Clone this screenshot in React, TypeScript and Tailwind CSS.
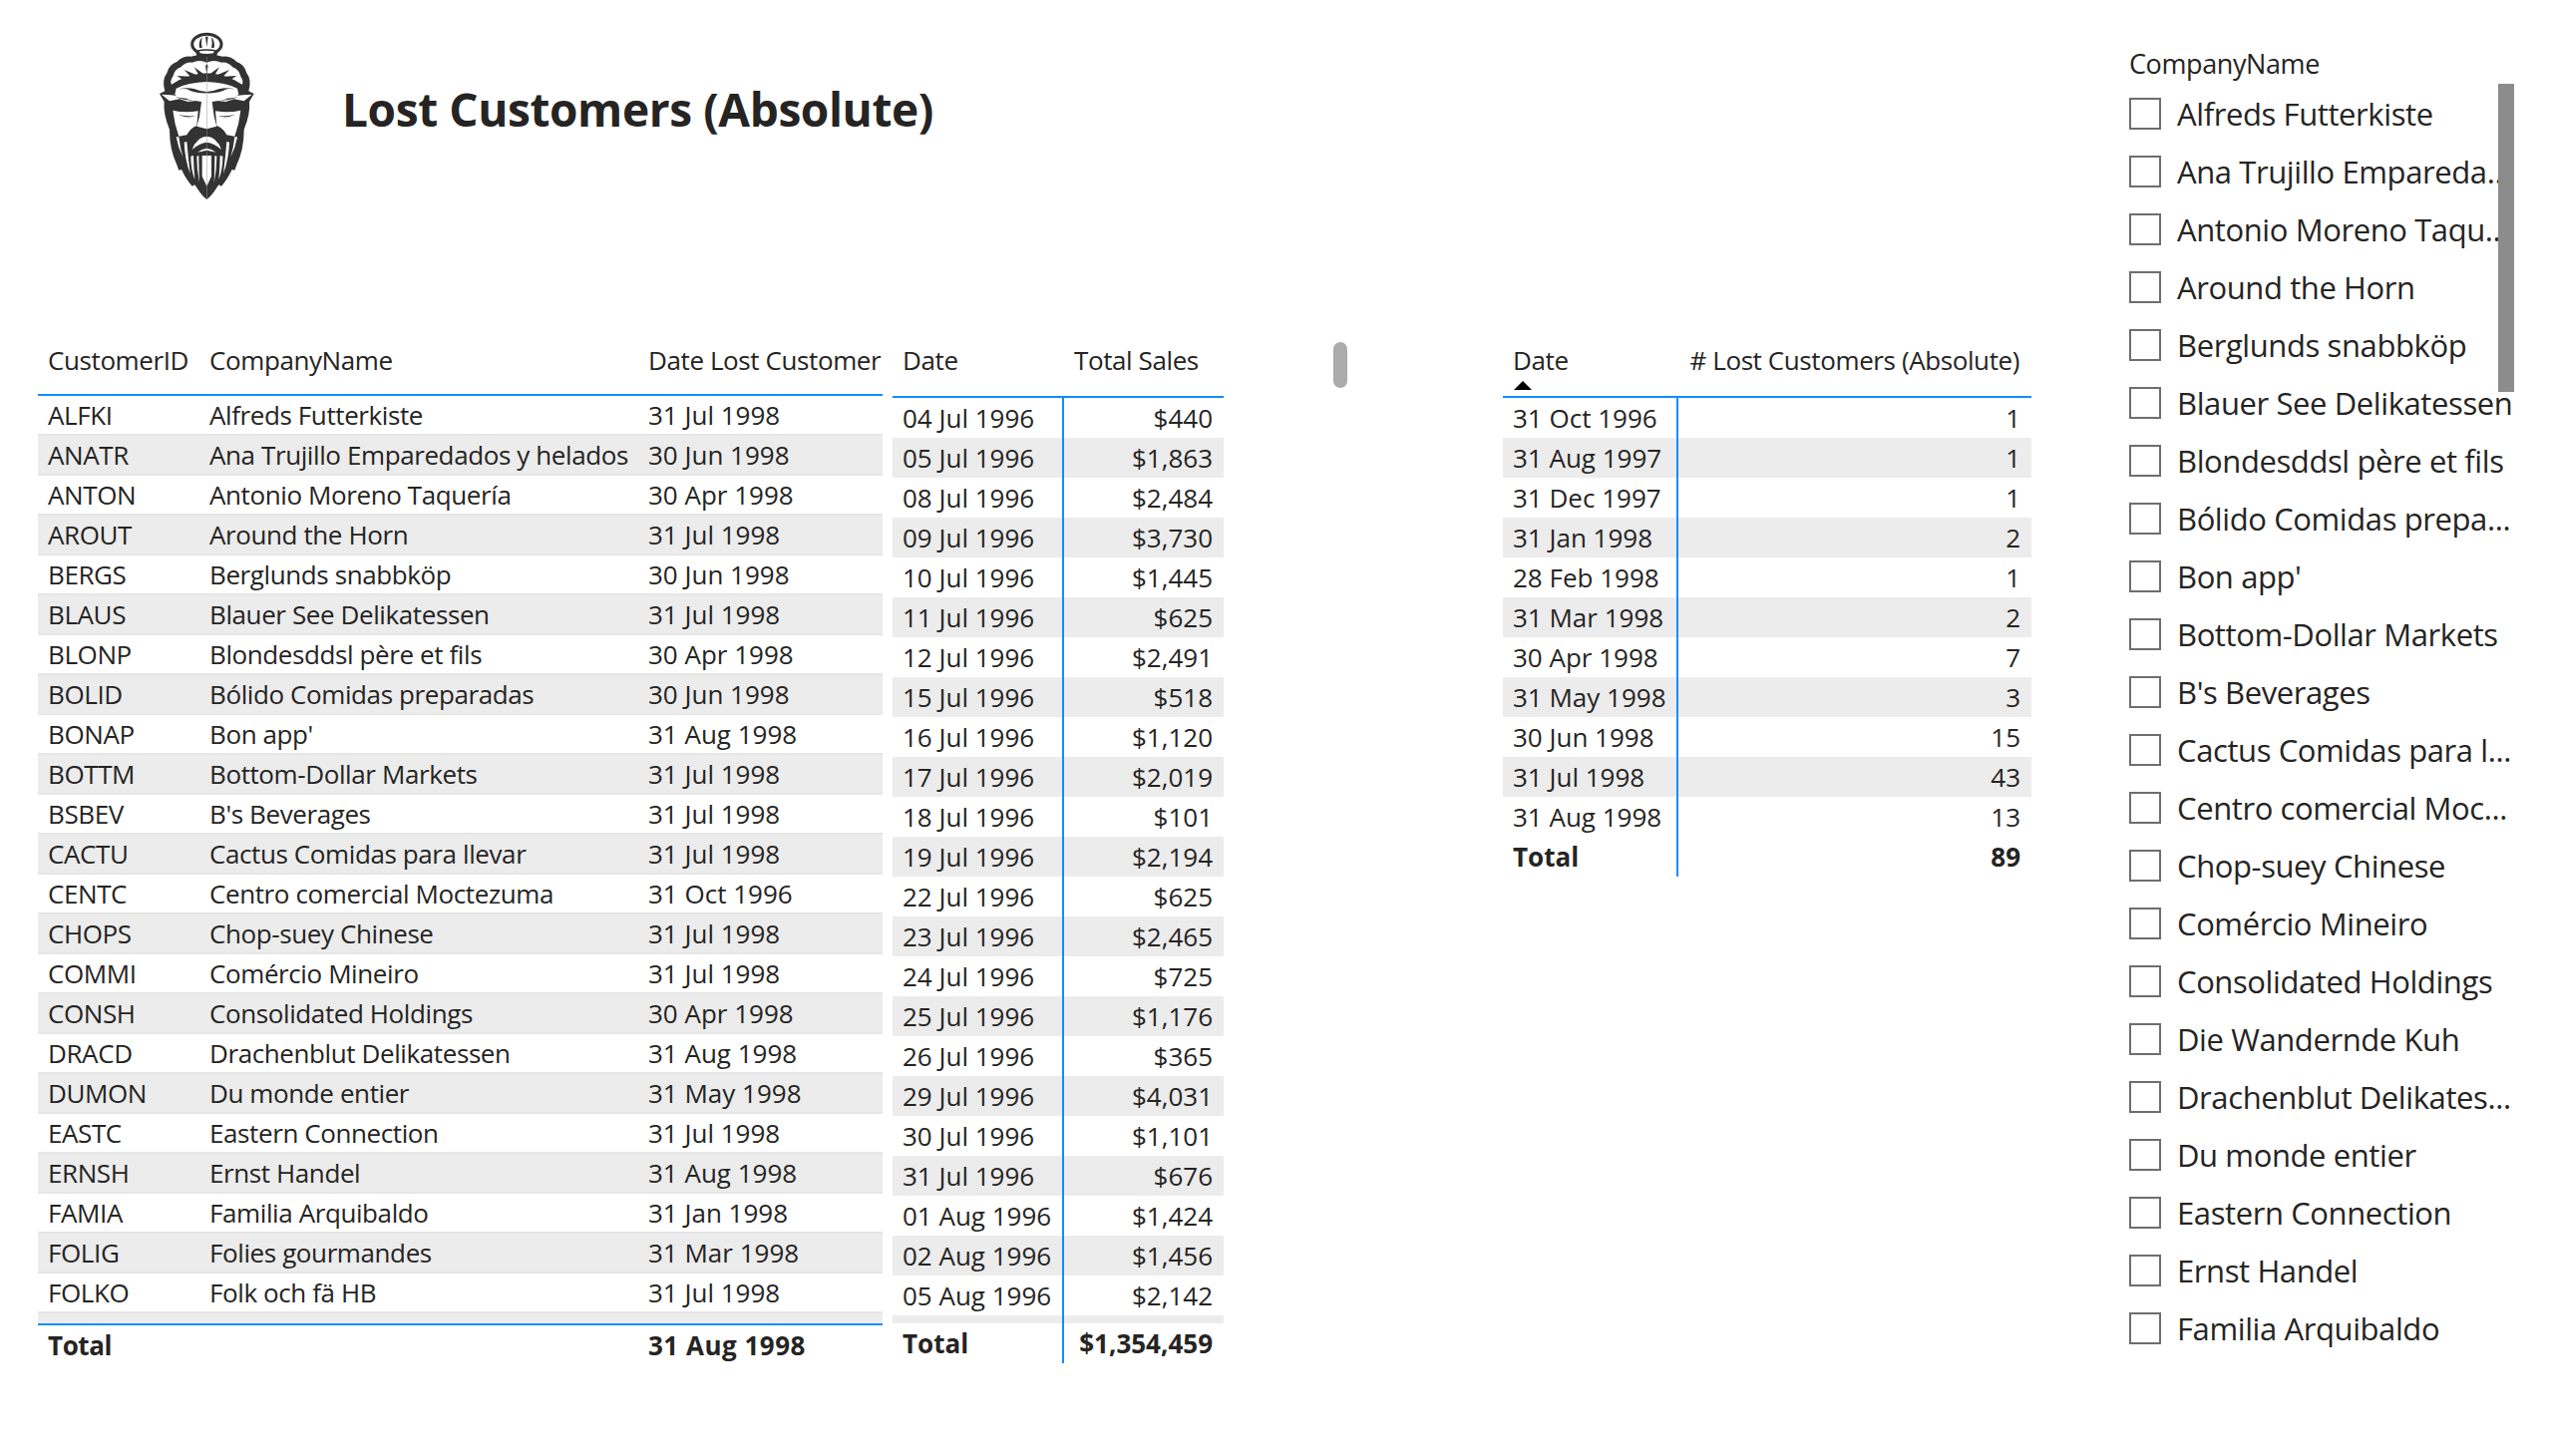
const customers: [string, string, string][] = [
  ["ALFKI", "Alfreds Futterkiste", "31 Jul 1998"],
  ["ANATR", "Ana Trujillo Emparedados y helados", "30 Jun 1998"],
  ["ANTON", "Antonio Moreno Taquería", "30 Apr 1998"],
  ["AROUT", "Around the Horn", "31 Jul 1998"],
  ["BERGS", "Berglunds snabbköp", "30 Jun 1998"],
  ["BLAUS", "Blauer See Delikatessen", "31 Jul 1998"],
  ["BLONP", "Blondesddsl père et fils", "30 Apr 1998"],
  ["BOLID", "Bólido Comidas preparadas", "30 Jun 1998"],
  ["BONAP", "Bon app'", "31 Aug 1998"],
  ["BOTTM", "Bottom-Dollar Markets", "31 Jul 1998"],
  ["BSBEV", "B's Beverages", "31 Jul 1998"],
  ["CACTU", "Cactus Comidas para llevar", "31 Jul 1998"],
  ["CENTC", "Centro comercial Moctezuma", "31 Oct 1996"],
  ["CHOPS", "Chop-suey Chinese", "31 Jul 1998"],
  ["COMMI", "Comércio Mineiro", "31 Jul 1998"],
  ["CONSH", "Consolidated Holdings", "30 Apr 1998"],
  ["DRACD", "Drachenblut Delikatessen", "31 Aug 1998"],
  ["DUMON", "Du monde entier", "31 May 1998"],
  ["EASTC", "Eastern Connection", "31 Jul 1998"],
  ["ERNSH", "Ernst Handel", "31 Aug 1998"],
  ["FAMIA", "Familia Arquibaldo", "31 Jan 1998"],
  ["FOLIG", "Folies gourmandes", "31 Mar 1998"],
  ["FOLKO", "Folk och fä HB", "31 Jul 1998"],
];

const sales: [string, string][] = [
  ["04 Jul 1996", "$440"],
  ["05 Jul 1996", "$1,863"],
  ["08 Jul 1996", "$2,484"],
  ["09 Jul 1996", "$3,730"],
  ["10 Jul 1996", "$1,445"],
  ["11 Jul 1996", "$625"],
  ["12 Jul 1996", "$2,491"],
  ["15 Jul 1996", "$518"],
  ["16 Jul 1996", "$1,120"],
  ["17 Jul 1996", "$2,019"],
  ["18 Jul 1996", "$101"],
  ["19 Jul 1996", "$2,194"],
  ["22 Jul 1996", "$625"],
  ["23 Jul 1996", "$2,465"],
  ["24 Jul 1996", "$725"],
  ["25 Jul 1996", "$1,176"],
  ["26 Jul 1996", "$365"],
  ["29 Jul 1996", "$4,031"],
  ["30 Jul 1996", "$1,101"],
  ["31 Jul 1996", "$676"],
  ["01 Aug 1996", "$1,424"],
  ["02 Aug 1996", "$1,456"],
  ["05 Aug 1996", "$2,142"],
];

const lost: [string, string][] = [
  ["31 Oct 1996", "1"],
  ["31 Aug 1997", "1"],
  ["31 Dec 1997", "1"],
  ["31 Jan 1998", "2"],
  ["28 Feb 1998", "1"],
  ["31 Mar 1998", "2"],
  ["30 Apr 1998", "7"],
  ["31 May 1998", "3"],
  ["30 Jun 1998", "15"],
  ["31 Jul 1998", "43"],
  ["31 Aug 1998", "13"],
];

const slicerItems = [
  "Alfreds Futterkiste",
  "Ana Trujillo Empareda...",
  "Antonio Moreno Taqu...",
  "Around the Horn",
  "Berglunds snabbköp",
  "Blauer See Delikatessen",
  "Blondesddsl père et fils",
  "Bólido Comidas prepa...",
  "Bon app'",
  "Bottom-Dollar Markets",
  "B's Beverages",
  "Cactus Comidas para l...",
  "Centro comercial Moc...",
  "Chop-suey Chinese",
  "Comércio Mineiro",
  "Consolidated Holdings",
  "Die Wandernde Kuh",
  "Drachenblut Delikates...",
  "Du monde entier",
  "Eastern Connection",
  "Ernst Handel",
  "Familia Arquibaldo",
];

// one half of the face, mirrored around x=262 in Logo
function LogoHalf() {
  return (
    <g>
      {/* silhouette */}
      <path
        fill="#333"
        d="M262 112 Q240 100 215 110 Q190 108 172 126 Q148 134 142 160 Q126 180 136 214 L120 222 L134 246 Q130 280 150 330 Q150 390 172 436 L178 452 L186 450 Q200 480 218 500 L226 496 L234 508 Q248 530 262 540 Z"
      />
      {/* hair */}
      <path
        fill="#fff"
        d="M262 128 Q240 118 218 128 Q198 126 184 142 Q164 150 160 170 Q150 184 156 194 Q205 162 262 160 Z"
      />
      <path fill="#333" d="M262 164 L258 138 L262 132 Z M238 166 L224 142 L252 162 Z M214 172 L194 150 L232 166 Z M194 182 L172 168 L212 170 Z" />
      {/* forehead and nose */}
      <path
        fill="#fff"
        d="M262 186 Q205 188 170 206 L166 224 L182 236 L246 246 L240 290 L232 320 L262 328 Z"
      />
      <path fill="#333" d="M262 220 Q225 222 202 208 Q182 206 168 210 Q200 200 226 208 Q245 216 262 216 Z" />
      {/* pointed brow */}
      <path fill="#fff" d="M126 224 Q180 224 236 242 L205 246 L180 238 L150 244 Z" />
      <path fill="#333" d="M165 232 Q195 234 222 243 L196 240 Z" />
      {/* cheek */}
      <path fill="#fff" d="M160 272 Q195 280 236 274 L232 318 Q212 326 202 346 L178 350 Q164 310 160 272 Z" />
      <path fill="#333" d="M176 284 Q205 298 228 288 Q205 292 176 284 Z" />
      {/* beard streaks */}
      <path fill="#fff" d="M170 352 Q176 385 190 412 Q182 385 178 352 Z M194 368 Q196 420 212 462 Q206 414 202 366 Z" />
      <path fill="#fff" d="M214 410 Q214 450 226 480 Q222 440 222 408 Z M232 410 Q232 450 240 490 Q238 440 238 408 Z" />
      <path fill="#fff" d="M262 350 Q232 352 218 390 Q240 370 262 368 Z" />
      <path fill="#fff" d="M262 392 L234 398 Q248 388 262 386 Z M262 408 L248 408 L248 470 L262 500 Z" />
    </g>
  );
}

function Logo() {
  return (
    <svg viewBox="0 0 540 570" className="w-[180px] h-[190px] shrink-0">
      <ellipse cx="262" cy="73" rx="44" ry="30" fill="#fff" stroke="#333" strokeWidth="9" />
      <path
        fill="#333"
        d="M228 92 Q262 84 296 92 L292 108 Q262 116 232 108 Z M240 84 Q236 66 248 52 Q244 70 248 84 Z M262 82 L258 50 L266 50 Z M284 84 Q288 66 276 52 Q280 70 276 84 Z"
      />
      <path fill="#fff" d="M240 94 Q262 90 284 94 L282 100 Q262 104 242 100 Z" />
      <LogoHalf />
      <g transform="matrix(-1 0 0 1 524 0)">
        <LogoHalf />
      </g>
    </svg>
  );
}

function CustomerTable() {
  return (
    <div className="w-[847px] shrink-0">
      <div className="flex h-[52px]">
        <div className="w-[162px] px-[10px] leading-[36px] whitespace-nowrap">CustomerID</div>
        <div className="w-[440px] px-[10px] leading-[36px]">CompanyName</div>
        <div className="w-[245px] px-[10px] leading-[36px] whitespace-nowrap">Date Lost Customer</div>
      </div>
      <div className="border-t-2 border-[#118dff] border-b-2">
        {customers.map((c, i) => (
          <div
            key={c[0]}
            className={`flex h-[40px] border-b-2 border-[#e6e6e6] ${i % 2 === 1 ? "bg-[#ececec]" : "bg-white"}`}
          >
            <div className="w-[162px] px-[10px] leading-[39px]">{c[0]}</div>
            <div className="w-[440px] px-[10px] leading-[39px] whitespace-nowrap">{c[1]}</div>
            <div className="w-[245px] px-[10px] leading-[39px] tracking-normal">{c[2]}</div>
          </div>
        ))}
        <div className="h-[10px] bg-[#ececec]"></div>
      </div>
      <div className="flex h-[38px] font-bold leading-[40px]">
        <div className="w-[602px] px-[10px]">Total</div>
        <div className="w-[245px] px-[10px] tracking-[0.5px]">31 Aug 1998</div>
      </div>
    </div>
  );
}

function SalesTable() {
  return (
    <div className="w-[332px] ml-[10px] shrink-0">
      <div className="flex h-[54px]">
        <div className="w-[172px] px-[10px] leading-[36px]">Date</div>
        <div className="w-[160px] px-[10px] leading-[36px] whitespace-nowrap">Total Sales</div>
      </div>
      <div className="border-t-2 border-[#118dff] tracking-normal">
        {sales.map((s, i) => (
          <div key={s[0]} className={`flex h-[40px] leading-[40px] ${i % 2 === 1 ? "bg-[#ececec]" : "bg-white"}`}>
            <div className="w-[172px] px-[10px] border-r-2 border-[#118dff] whitespace-nowrap">{s[0]}</div>
            <div className="w-[160px] px-[11px] text-right">{s[1]}</div>
          </div>
        ))}
        <div className="flex h-[8px] bg-[#ececec]">
          <div className="w-[172px] border-r-2 border-[#118dff]"></div>
        </div>
        <div className="flex h-[40px] leading-[40px] font-bold">
          <div className="w-[172px] px-[10px] border-r-2 border-[#118dff]">Total</div>
          <div className="w-[160px] px-[11px] text-right whitespace-nowrap">$1,354,459</div>
        </div>
      </div>
    </div>
  );
}

function LostTable() {
  return (
    <div className="w-[530px] ml-[156px] shrink-0">
      <div className="h-[54px] flex">
        <div className="w-[176px] pl-[10px] relative leading-[36px]">
          Date
          <svg viewBox="0 0 18 9" className="w-[18px] h-[9px] absolute left-[11px] top-[39px]">
            <path d="M0 9 L9 0 L18 9 Z" fill="#000" />
          </svg>
        </div>
        <div className="flex-1 pr-[12px] text-right leading-[36px] whitespace-nowrap"># Lost Customers (Absolute)</div>
      </div>
      <div className="border-t-2 border-[#118dff] tracking-normal">
        {lost.map((l, i) => (
          <div key={l[0]} className={`flex h-[40px] leading-[40px] ${i % 2 === 1 ? "bg-[#ececec]" : "bg-white"}`}>
            <div className="w-[176px] pl-[10px] border-r-2 border-[#118dff]">{l[0]}</div>
            <div className="flex-1 pr-[11px] text-right">{l[1]}</div>
          </div>
        ))}
        <div className="flex h-[40px] leading-[40px] font-bold">
          <div className="w-[176px] pl-[10px] border-r-2 border-[#118dff]">Total</div>
          <div className="flex-1 pr-[11px] text-right">89</div>
        </div>
      </div>
    </div>
  );
}

function Slicer() {
  return (
    <div className="relative w-[425px] shrink-0 pt-[45px]">
      <div className="h-[40px] leading-[38px] text-[27px] font-medium">CompanyName</div>
      {slicerItems.map((name) => (
        <div key={name} className="flex items-center h-[58px]">
          <div className="w-[32px] h-[32px] border-2 border-[#6f6d6d] shrink-0"></div>
          <div className="ml-[16px] text-[31px] whitespace-nowrap">{name}</div>
        </div>
      ))}
      <div className="absolute left-[370px] top-[84px] w-[16px] h-[309px] bg-[#8c8c8c]"></div>
    </div>
  );
}

export default function App() {
  return (
    <div className="w-[2560px] h-[1460px] bg-white flex text-[#252423] text-[26px] tracking-[-0.4px] overflow-hidden font-['Open_Sans',sans-serif]">
      <div className="w-[2135px] shrink-0">
        <div className="h-[343px] pl-[120px] pt-[20px] flex items-start">
          <Logo />
          <h1 className="ml-[43px] mt-[53px] text-[46px] leading-[72px] font-bold whitespace-nowrap">
            Lost Customers (Absolute)
          </h1>
        </div>
        <div className="flex items-start pl-[38px]">
          <CustomerTable />
          <SalesTable />
          <div className="ml-[110px] w-[14px] h-[46px] rounded-full bg-[#ababab] shrink-0"></div>
          <LostTable />
        </div>
      </div>
      <Slicer />
    </div>
  );
}
